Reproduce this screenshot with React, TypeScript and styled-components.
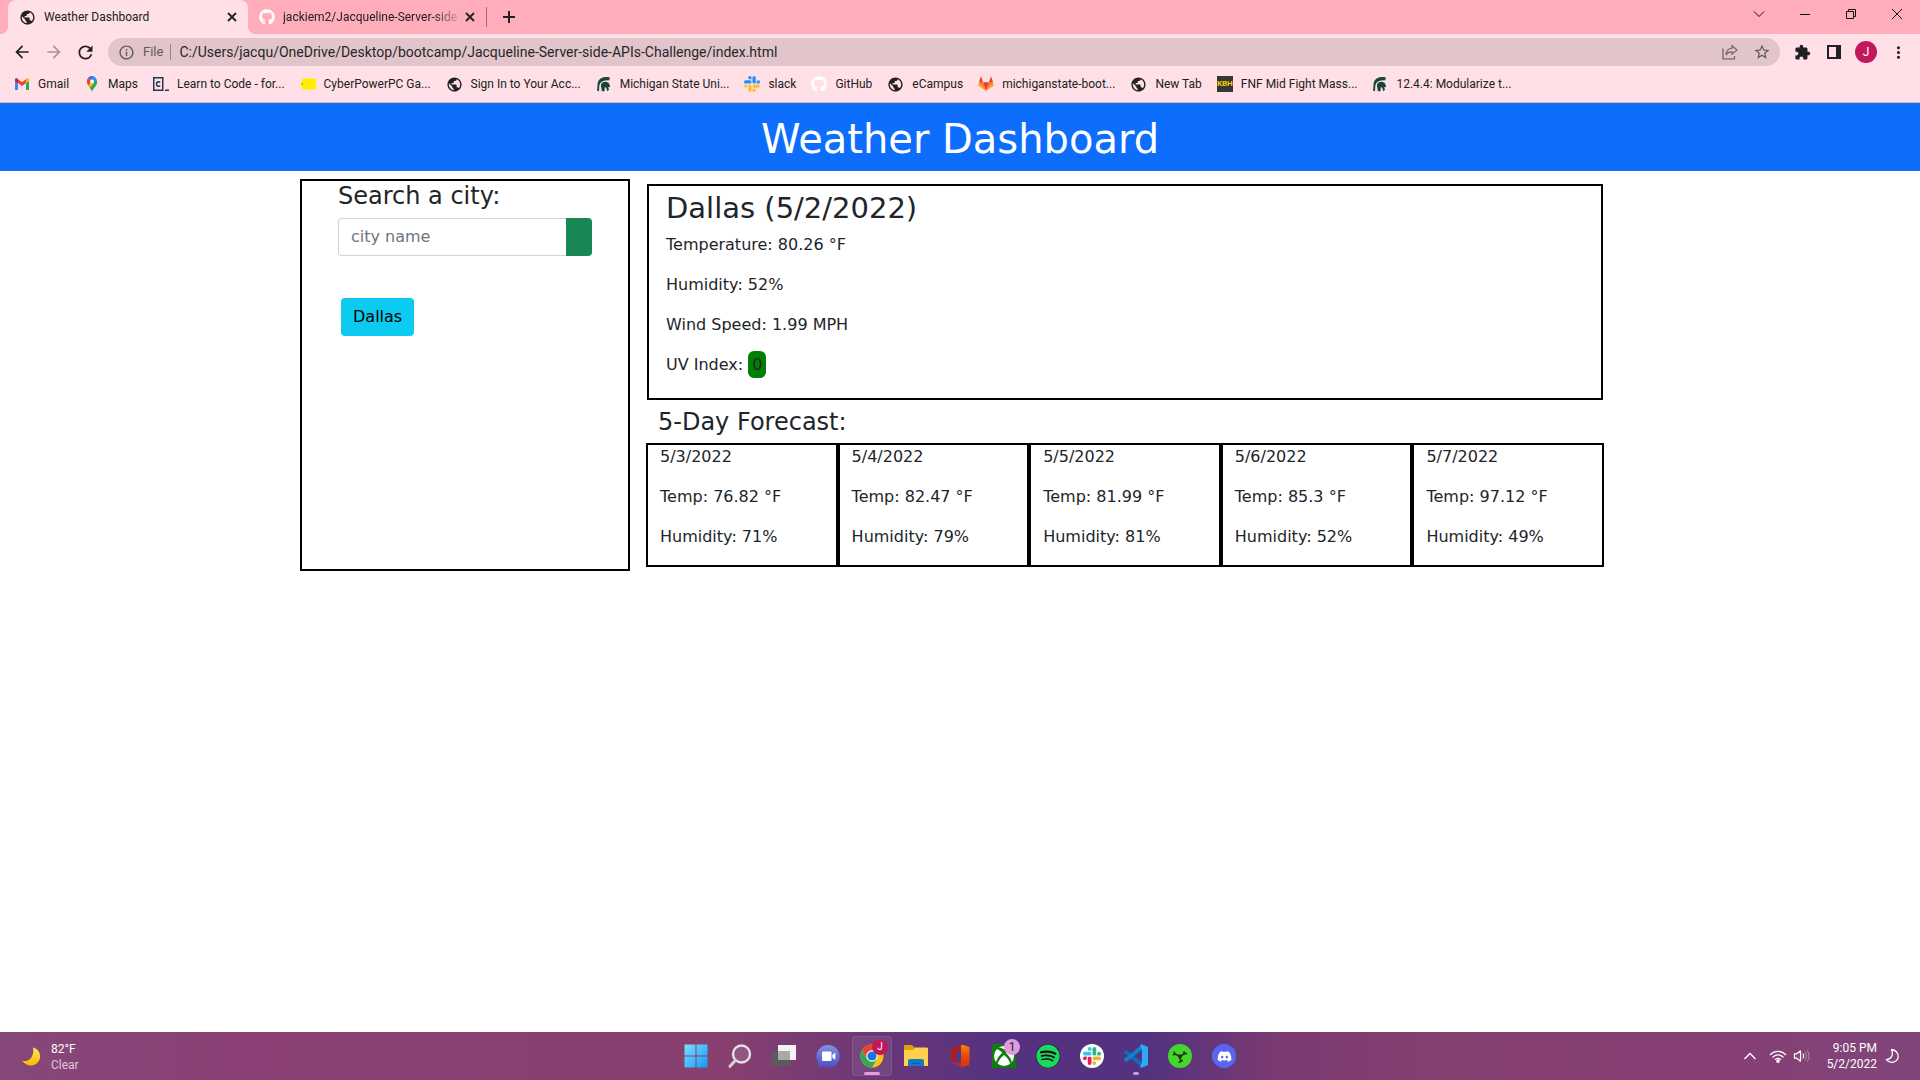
import React from 'react';
import styled, { createGlobalStyle } from 'styled-components';
import {
  MdPublic,
  MdExtension,
  MdStarOutline,
  MdInfoOutline,
  MdMoreVert,
  MdArrowBack,
  MdArrowForward,
  MdRefresh,
} from 'react-icons/md';
import { FaGithub, FaDiscord, FaSpotify } from 'react-icons/fa';

const GlobalStyle = createGlobalStyle`
  *, *::before, *::after { box-sizing: border-box; }
  body {
    margin: 0;
    background: #fff;
    color: #212529;
    font: 16px/24px "DejaVu Sans", Verdana, sans-serif;
  }
  h1, h2, h3, p, ul { margin: 0; padding: 0; font-weight: 400; }
  ul { list-style: none; }
  button, input { font: inherit; color: inherit; }
  svg { display: block; flex: none; }
`;

const Screen = styled.div`
  display: flex;
  flex-direction: column;
  min-height: 100vh;
`;

/* ---------- browser window ---------- */

const Browser = styled.header`
  background: #ffe0e6;
  border-bottom: 1px solid #d9b9c0;
  font: 12px/16px Roboto, "Noto Sans", sans-serif;
  color: #202124;
`;

const TabStrip = styled.div`
  display: flex;
  height: 34px;
  padding-left: 8px;
  background: #ffadbb;
`;

const Tab = styled.div<{ $active?: boolean; $width: number }>`
  position: relative;
  display: flex;
  align-items: center;
  gap: 8px;
  width: ${(p) => p.$width}px;
  padding: 0 11px;
  border-radius: 8px 8px 0 0;
  background: ${(p) => (p.$active ? '#ffe0e6' : 'transparent')};

  &::before,
  &::after {
    content: '';
    display: ${(p) => (p.$active ? 'block' : 'none')};
    position: absolute;
    bottom: 0;
    width: 8px;
    height: 8px;
  }
  &::before {
    left: -8px;
    background: radial-gradient(circle at 0 0, transparent 8px, #ffe0e6 8px);
  }
  &::after {
    right: -8px;
    background: radial-gradient(circle at 100% 0, transparent 8px, #ffe0e6 8px);
  }
`;

const TabTitle = styled.span<{ $fade?: boolean }>`
  flex: 1;
  min-width: 0;
  white-space: nowrap;
  ${(p) => p.$fade && 'mask-image: linear-gradient(90deg, #000 86%, rgba(0, 0, 0, .2));'}
`;

const PlainButton = styled.button<{ $w?: number; $h?: number }>`
  display: grid;
  place-items: center;
  flex: none;
  width: ${(p) => p.$w ?? 16}px;
  height: ${(p) => p.$h ?? 16}px;
  padding: 0;
  border: 0;
  background: none;
`;

const TabDivider = styled.span`
  align-self: center;
  width: 1px;
  height: 20px;
  margin-right: 14px;
  background: #a26b76;
`;

const WindowButtons = styled.div`
  display: flex;
  margin-left: auto;
`;

const Toolbar = styled.div`
  display: flex;
  align-items: center;
  height: 36px;
  padding-right: 6px;
`;

const Omnibox = styled.div`
  display: flex;
  align-items: center;
  flex: 1;
  height: 28px;
  margin: 0 6px 0 2px;
  padding: 0 2px 0 10px;
  border-radius: 14px;
  background: #e1c5ca;
  color: #5f5a5e;
`;

const FileLabel = styled.label`
  margin-left: 8px;
  padding-right: 7px;
  border-right: 1px solid #98858a;
  font-size: 13px;
`;

const UrlInput = styled.input`
  flex: 1;
  min-width: 0;
  padding: 0 0 0 8px;
  border: 0;
  outline: 0;
  background: none;
  font-size: 14px;
  line-height: 20px;
  color: #28262b;
`;

const OmniActions = styled.div`
  display: flex;
`;

const Avatar = styled.span<{ $size: number }>`
  display: grid;
  place-items: center;
  width: ${(p) => p.$size}px;
  height: ${(p) => p.$size}px;
  border-radius: 50%;
  background: #c2185b;
  color: #fff;
  font: 12px/12px Roboto, sans-serif;
`;

const Bookmarks = styled.ul`
  display: flex;
  align-items: center;
  gap: 15px;
  height: 32px;
  padding: 0 0 4px 14px;
`;

const BookmarkLink = styled.a`
  display: flex;
  align-items: center;
  gap: 8px;
  color: inherit;
  text-decoration: none;
  white-space: nowrap;
`;

const KbhBadge = styled.span`
  display: grid;
  place-items: center;
  width: 16px;
  height: 16px;
  background: #363636;
  color: #ffcb05;
  font: 700 8px/16px Roboto, sans-serif;
`;

/* ---------- weather page ---------- */

const Page = styled.main`
  flex: 1;
`;

const Hero = styled.div`
  margin-bottom: 8px;
  padding: 12px 0 8px;
  background: #0d6efd;
  color: #fff;
  text-align: center;

  h1 {
    font-size: 40px;
    line-height: 48px;
  }
`;

const Container = styled.div`
  display: grid;
  grid-template-columns: 1fr 3fr;
  max-width: 1320px;
  margin: 0 auto;
`;

const SearchPanel = styled.section`
  padding: 0 36px;
  border: 2px solid #000;
`;

const Heading = styled.h2<{ $large?: boolean }>`
  display: block;
  padding-top: 1px;
  font-size: ${(p) => (p.$large ? 29 : 24)}px;
  line-height: ${(p) => (p.$large ? 35 : 29)}px;
`;

const SearchForm = styled.form`
  display: flex;
  height: 38px;
  margin: 7px 0 42px;

  input {
    flex: 1;
    min-width: 0;
    padding: 6px 12px;
    border: 1px solid #ced4da;
    border-right: 0;
    border-radius: 4px 0 0 4px;
    outline: 0;
  }
  input::placeholder {
    color: #6c757d;
    opacity: 1;
  }
  button {
    width: 26px;
    border: 0;
    border-radius: 0 4px 4px 0;
    background: #198754;
  }
`;

const CityButton = styled.button`
  height: 38px;
  margin-left: 3px;
  padding: 6px 12px;
  border: 0;
  border-radius: 4px;
  background: #0dcaf0;
  color: #000;
`;

const Results = styled.div`
  padding: 5px 16px 4px;
`;

const Current = styled.section`
  margin: 0 1px 7px;
  padding: 4px 17px 5px;
  border: 2px solid #000;

  h2 {
    margin-bottom: 7px;
  }
  p {
    margin-bottom: 16px;
  }
`;

const UvBadge = styled.span`
  padding: 4px;
  border-radius: 6px;
  background: #008000;
`;

const ForecastTitle = styled.div`
  padding: 0 12px 6px;
`;

const Forecast = styled.div`
  display: grid;
  grid-template-columns: repeat(5, 1fr);
`;

const Day = styled.article`
  padding: 0 12px;
  border: 2px solid #000;

  p {
    margin-bottom: 16px;
  }
`;

/* ---------- taskbar ---------- */

const Taskbar = styled.footer`
  display: grid;
  grid-template-columns: 1fr auto 1fr;
  align-items: center;
  height: 48px;
  background: linear-gradient(
    90deg,
    #854878 0,
    #8a4074 12%,
    #87406f 38%,
    #6d3876 45%,
    #553280 52%,
    #53327f 60%,
    #793972 66%,
    #84406f 75%,
    #863f74 90%,
    #80457a 100%
  );
  color: #fff;
  font: 12px/16px Roboto, "Noto Sans", sans-serif;
`;

const WeatherWidget = styled.button`
  display: flex;
  align-items: center;
  justify-self: start;
  gap: 8px;
  padding: 1px 0 0 21px;
  border: 0;
  background: none;
  text-align: left;

  small {
    display: block;
    font-size: 12px;
    color: #e0c8da;
  }
`;

const Apps = styled.div`
  display: flex;
  gap: 4px;
`;

const AppButton = styled.button<{ $open?: boolean; $running?: 'wide' | 'dot' }>`
  position: relative;
  display: grid;
  place-items: center;
  width: 40px;
  height: 40px;
  padding: 0;
  border: 1px solid ${(p) => (p.$open ? 'rgba(255,255,255,.08)' : 'transparent')};
  border-radius: 4px;
  background: ${(p) => (p.$open ? 'rgba(255,255,255,.07)' : 'none')};

  &::after {
    content: '';
    display: ${(p) => (p.$running ? 'block' : 'none')};
    position: absolute;
    bottom: 0;
    left: 50%;
    width: ${(p) => (p.$running === 'wide' ? 16 : 6)}px;
    height: 3px;
    border-radius: 2px;
    background: ${(p) => (p.$running === 'wide' ? '#e29ae0' : '#b9a3c8')};
    transform: translateX(-50%);
  }
`;

const Badge = styled.span<{ $pink?: boolean }>`
  position: absolute;
  top: 2px;
  right: 3px;
  display: grid;
  place-items: center;
  width: 16px;
  height: 16px;
  border-radius: 50%;
  background: ${(p) => (p.$pink ? '#e29ae0' : '#c2185b')};
  color: ${(p) => (p.$pink ? '#222' : '#fff')};
  font: ${(p) => (p.$pink ? 12 : 10)}px/16px Roboto, sans-serif;
`;

const RoundIcon = styled.span<{ $bg: string }>`
  display: grid;
  place-items: center;
  width: 24px;
  height: 24px;
  border-radius: 50%;
  background: ${(p) => p.$bg};
`;

const Tray = styled.div`
  display: flex;
  align-items: center;
  justify-self: end;
  padding-right: 20px;
`;

const TrayIcons = styled.div`
  display: flex;
  align-items: center;
  gap: 6px;
  margin-right: 16px;
`;

const Clock = styled.time`
  margin-right: 8px;
  text-align: right;

  span {
    display: block;
  }
`;

/* ---------- drawings ---------- */

const Cross = () => (
  <svg width="10" height="10" viewBox="0 0 10 10" stroke="#202124" strokeWidth="1.800">
    <path d="M1 1l8 8M9 1l-8 8" />
  </svg>
);

const Globe = () => <MdPublic size={17} color="#202124" />;

const Gmail = () => (
  <svg width="16" height="16" viewBox="0 0 16 16">
    <path fill="#4285f4" d="M1 14h3V7L1 4.800z" />
    <path fill="#34a853" d="M12 14h3V4.800L12 7z" />
    <path fill="#ea4335" d="M4 7V3.200l4 3 4-3V7l-4 3z" />
    <path fill="#c5221f" d="M1 5V3.500C1 2 2.700 1.700 4 2.800V7.200z" />
    <path fill="#fbbc04" d="M15 5V3.500c0-1.500-1.700-1.800-3-.7v4.400z" />
  </svg>
);

const Maps = () => (
  <svg width="16" height="16" viewBox="0 0 16 16">
    <path fill="#34a853" d="M8 16c.5-3.500 5.200-5.500 5.200-10.500L12.400 3 4.200 9.500C5.800 12 7.400 13.500 8 16z" />
    <path fill="#fbbc04" d="M4.200 9.600l2.200-2.700 3.400.3-4 4.800z" />
    <path fill="#4285f4" d="M12.400 3C11.800 1.600 10.800.7 9.500.3L6.300 4l3.500 3.100z" />
    <path fill="#1a73e8" d="M9.500.3C7.400-.3 5.300.4 4 2l2.400 2z" />
    <path fill="#ea4335" d="M4 2C2.500 3.800 2.400 6.700 4.200 9.600l3.700-4.400z" />
    <circle cx="8" cy="5.500" r="2" fill="#fff" />
  </svg>
);

const Codecademy = () => (
  <svg width="16" height="16" viewBox="0 0 16 16" fill="none" stroke="#1f3a56">
    <rect x="0.750" y="1.750" width="9" height="12.500" strokeWidth="1.500" />
    <path d="M7.300 6.300C5 5 3.500 6.300 3.500 8s1.500 3 3.800 1.800M12 14.300h4" strokeWidth="1.500" />
  </svg>
);

const YellowTag = () => (
  <svg width="16" height="16" viewBox="0 0 16 16">
    <path fill="#ffee00" d="M3 2.500h13v11H3L1.500 11V9.500H0v-2h1.500V5z" />
    <circle cx="2.500" cy="8" r="0.700" fill="#8a7a00" />
  </svg>
);

const Spartan = () => (
  <svg width="16" height="16" viewBox="0 0 16 16" fill="#18453b">
    <path d="M13.500 1.200C8 .3 3 2 1.800 6.500 1.200 9 1.600 12 1 14.500l2 .8c.3-3.300-.1-6 1.200-8C5.800 4.800 9 4 13.500 4.300z" />
    <path d="M5 8.200C6.500 5.600 10 5 12.300 6.800c1.300 1 1.400 2.600 1.800 4.200l-2 .2.900 2.600-1.800 1.400-.9-3.400-1.500-.5-.3 3.900H5.800C6 12.500 4.500 11 5 8.200z" />
  </svg>
);

const SLACK = [
  'M5.042 15.165a2.528 2.528 0 0 1-2.520 2.523A2.528 2.528 0 0 1 0 15.165a2.527 2.527 0 0 1 2.522-2.520h2.520v2.520zM6.313 15.165a2.527 2.527 0 0 1 2.521-2.520 2.527 2.527 0 0 1 2.521 2.520v6.313A2.528 2.528 0 0 1 8.834 24a2.528 2.528 0 0 1-2.521-2.522v-6.313z',
  'M8.834 5.042a2.528 2.528 0 0 1-2.521-2.520A2.528 2.528 0 0 1 8.834 0a2.528 2.528 0 0 1 2.521 2.522v2.520H8.834zM8.834 6.313a2.528 2.528 0 0 1 2.521 2.521 2.528 2.528 0 0 1-2.521 2.521H2.522A2.528 2.528 0 0 1 0 8.834a2.528 2.528 0 0 1 2.522-2.521h6.312z',
  'M18.956 8.834a2.528 2.528 0 0 1 2.522-2.521A2.528 2.528 0 0 1 24 8.834a2.528 2.528 0 0 1-2.522 2.521h-2.522V8.834zM17.688 8.834a2.528 2.528 0 0 1-2.523 2.521 2.527 2.527 0 0 1-2.520-2.521V2.522A2.527 2.527 0 0 1 15.165 0a2.528 2.528 0 0 1 2.523 2.522v6.312z',
  'M15.165 18.956a2.528 2.528 0 0 1 2.523 2.522A2.528 2.528 0 0 1 15.165 24a2.527 2.527 0 0 1-2.520-2.522v-2.522h2.520zM15.165 17.688a2.527 2.527 0 0 1-2.520-2.523 2.526 2.526 0 0 1 2.520-2.520h6.313A2.527 2.527 0 0 1 24 15.165a2.528 2.528 0 0 1-2.522 2.523h-6.313z',
];

const Slack = ({ size, colors }: { size: number; colors: string[] }) => (
  <svg width={size} height={size} viewBox="0 0 24 24">
    {SLACK.map((d, i) => (
      <path key={i} d={d} fill={colors[i]} />
    ))}
  </svg>
);

const Gitlab = () => (
  <svg width="16" height="16" viewBox="0 0 16 16">
    <path fill="#e24329" d="M8 15L5 6.200h6z" />
    <path fill="#fc6d26" d="M8 15L5 6.200H1zM8 15l3-8.800h4z" />
    <path fill="#fca326" d="M1 6.200L.2 9c-.1.300 0 .6.200.8L8 15zM15 6.200l.8 2.800c.1.300 0 .6-.2.800L8 15z" />
    <path fill="#e24329" d="M1 6.200h4L3.300 1c-.1-.3-.5-.3-.6 0zM15 6.200h-4L12.700 1c.1-.3.5-.3.6 0z" />
  </svg>
);

const Share = () => (
  <svg width="16" height="16" viewBox="0 0 16 16" fill="none" stroke="#76686d" strokeWidth="1.300">
    <path d="M1 4.500v10.300h11.500V12" />
    <path d="M10 1.800l5 4.200-5 4.200V7.800c-2.800 0-4.600.8-6 3 .3-3.800 2.500-6.200 6-6.600z" />
  </svg>
);

const SidePanel = () => (
  <svg width="14" height="14" viewBox="0 0 14 14">
    <path fill="#202124" fillRule="evenodd" d="M0 0h14v14H0zM2 2v10h7V2z" />
  </svg>
);

const WindowIcon = ({ d }: { d: string }) => (
  <svg width="12" height="12" viewBox="0 0 12 12" fill="none" stroke="#111" strokeWidth="1">
    <path d={d} />
  </svg>
);

const MoonYellow = () => (
  <svg width="22" height="22" viewBox="0 0 22 22">
    <defs>
      <linearGradient id="moon" x1="0" y1="0" x2="0" y2="1">
        <stop offset="0" stopColor="#ffe45c" />
        <stop offset="1" stopColor="#ffb900" />
      </linearGradient>
    </defs>
    <path fill="url(#moon)" d="M12 1.500c5 1.200 8.300 6 6.800 11.200C16.800 19.800 7 22.500 1 14.800c6.500 1.700 12.800-3.800 11-13.300z" />
  </svg>
);

const Windows = () => (
  <svg width="24" height="24" viewBox="0 0 24 24">
    <defs>
      <linearGradient id="win" x1="0" y1="0" x2="1" y2="1">
        <stop offset="0" stopColor="#7ce0ff" />
        <stop offset="1" stopColor="#0f9bf7" />
      </linearGradient>
    </defs>
    <path fill="url(#win)" d="M.5.5h11v11H.5zM12.500.5h11v11h-11zM.5 12.500h11v11H.5zM12.500 12.500h11v11h-11z" />
  </svg>
);

const Search = () => (
  <svg width="24" height="24" viewBox="0 0 24 24" fill="none" strokeLinecap="round">
    <circle cx="13.500" cy="10" r="8.500" fill="rgba(255,255,255,.12)" stroke="#e6e2e6" strokeWidth="2.400" />
    <path d="M7.300 16.500L2 22.300" stroke="#d5cfd6" strokeWidth="3" />
  </svg>
);

const TaskView = () => (
  <svg width="26" height="24" viewBox="0 0 26 24">
    <path fill="#5d5a5e" d="M1 7h18v15H1z" />
    <path fill="#f2f2f2" d="M7 1h18v15H7z" />
    <path fill="#a9a8aa" d="M7 7h12v9H7z" />
  </svg>
);

const Chat = () => (
  <svg width="24" height="24" viewBox="0 0 24 24">
    <defs>
      <linearGradient id="chat" x1="0" y1="0" x2="0" y2="1">
        <stop offset="0" stopColor="#8091e0" />
        <stop offset="1" stopColor="#4d50c4" />
      </linearGradient>
    </defs>
    <path fill="url(#chat)" d="M12 1a11.300 11.300 0 1 1-5 21.300L1 23.500 2 18A11.300 11.300 0 0 1 12 1z" />
    <rect x="6" y="7.500" width="9.500" height="9.500" rx="1" fill="#fff" />
    <path fill="#fff" d="M16.300 11l3-2.500v7.500l-3-2.500z" />
  </svg>
);

const Chrome = () => (
  <svg width="24" height="24" viewBox="0 0 24 24">
    <circle cx="12" cy="12" r="11.500" fill="#fbc116" />
    <path fill="#ea4335" d="M2 6.200A11.500 11.500 0 0 1 22 6.250H12L7 14.900z" />
    <path fill="#34a853" d="M2 6.250l5 8.700 5 2.800 4.900 -2.850L12 23.500A11.500 11.500 0 0 1 2 6.250z" />
    <circle cx="12" cy="12" r="5.750" fill="#fff" />
    <circle cx="12" cy="12" r="4.600" fill="#1a73e8" />
  </svg>
);

const Folder = () => (
  <svg width="26" height="24" viewBox="0 0 26 24">
    <path fill="#e8a200" d="M1 2.500C1 1.700 1.500 1 2.300 1H9l2.500 2.500V8H1z" />
    <path fill="#ffd04c" d="M1 6h9l2-2.500h11.700c.8 0 1.300.6 1.300 1.300V22H1z" />
    <path fill="#1578c8" d="M5 17c0-1.100.9-2 2-2h12c1.100 0 2 .9 2 2v5H5z" />
    <path fill="#0c5ea8" d="M9 18.500h8v1.500H9z" />
  </svg>
);

const Office = () => (
  <svg width="24" height="24" viewBox="0 0 24 24">
    <defs>
      <linearGradient id="office" x1="0" y1="0" x2="0" y2="1">
        <stop offset="0" stopColor="#f28a00" />
        <stop offset="0.500" stopColor="#e8490f" />
        <stop offset="1" stopColor="#d8300c" />
      </linearGradient>
    </defs>
    <path fill="#b81a1a" d="M14 1L3 5v13l4.500-2V7.500l7-1.800z" />
    <path fill="#d3222a" d="M3 18l11 5v-3.500L7.500 18.500z" />
    <path fill="url(#office)" d="M13 1l2-.3 6.500 2.500v17.600L15 23.300 13 23z" />
  </svg>
);

const Xbox = () => (
  <svg width="24" height="24" viewBox="0 0 24 24">
    <path fill="#107c10" d="M0 0h24v24H0z" />
    <circle cx="12" cy="12" r="10" fill="#fff" />
    <path
      fill="#107c10"
      d="M12 5.500C10 3.800 7.500 2.800 5.700 3.800L4.500 5c3 .7 4.700 2.500 5.700 3.800C7 11.800 4 16 4.300 19l1.300 1c.8-3.500 3.600-6.800 6.400-9 2.800 2.200 5.600 5.500 6.400 9l1.300-1c.3-3-2.700-7.200-5.900-10.200 1-1.300 2.700-3.100 5.700-3.800l-1.200-1.200c-1.800-1-4.300 0-6.300 1.700z"
    />
  </svg>
);

const VsCode = () => (
  <svg width="24" height="24" viewBox="0 0 24 24">
    <path fill="#0a6ebd" d="M0 7.500L2 6l16 12v5.500L0 9z" />
    <path fill="#0f80d0" d="M0 16.500L2 18 18 6V.5L0 15z" />
    <path fill="#30a9f3" d="M17.500.2L24 3v18l-6.500 2.800L16 22.500 18 18V6l-2-4.500z" />
  </svg>
);

const Razer = () => (
  <svg width="16" height="16" viewBox="0 0 16 16" fill="none" stroke="#1a3d14" strokeWidth="1.700" strokeLinecap="round">
    <path d="M8 8.500L3 6M8 8.500L12.500 5.500M8 8.500l.7 5M3 6l-.8-1.700M3 6l-1.500.8M12.500 5.500L12 3.800M12.500 5.500l1.800.2M8.700 13.500l-1.500.7M8.700 13.500l1.500-.9" />
    <circle cx="8" cy="8.500" r="1.300" fill="#1a3d14" />
  </svg>
);

const Wifi = () => (
  <svg width="18" height="14" viewBox="0 0 18 14" fill="none" stroke="#fff" strokeWidth="1.300" strokeLinecap="round">
    <path d="M1.500 5.500c4.200-4.200 10.800-4.200 15 0M4 8c2.800-2.800 7.200-2.800 10 0M6.400 10.400c1.500-1.500 3.700-1.500 5.200 0" />
    <circle cx="9" cy="12" r="1.200" fill="#fff" />
  </svg>
);

const Volume = () => (
  <svg width="18" height="14" viewBox="0 0 18 14" fill="none" stroke="#fff" strokeWidth="1.200" strokeLinecap="round" strokeLinejoin="round">
    <path d="M1.500 4.800v4.400h2.300l3.700 3V1.800l-3.700 3zM10 5c.9 1.200.9 2.800 0 4" />
    <path d="M12 3.500c1.800 2 1.800 5 0 7M14.200 1.800c2.600 3 2.600 7.400 0 10.400" stroke="#b07fa6" />
  </svg>
);

const MoonOutline = () => (
  <svg width="15" height="16" viewBox="0 0 15 16" fill="none" stroke="#fff" strokeWidth="1.300" strokeLinejoin="round">
    <path d="M6.500 1.500c4.300.4 7 3.800 6.600 7.500-.5 5-7.800 7.500-11.800 2.600C5.500 11.500 9 8 6.500 1.500z" />
  </svg>
);

/* ---------- data ---------- */

const BRAND_SLACK = ['#e01e5a', '#36c5f0', '#2eb67d', '#ecb22e'];

const bookmarks = [
  { label: 'Gmail', icon: <Gmail /> },
  { label: 'Maps', icon: <Maps /> },
  { label: 'Learn to Code - for...', icon: <Codecademy /> },
  { label: 'CyberPowerPC Ga...', icon: <YellowTag /> },
  { label: 'Sign In to Your Acc...', icon: <Globe /> },
  { label: 'Michigan State Uni...', icon: <Spartan /> },
  { label: 'slack', icon: <Slack size={16} colors={['#ffc02e', '#1e90ff', '#1e90ff', '#ffc02e']} /> },
  { label: 'GitHub', icon: <FaGithub size={16} color="#fff" /> },
  { label: 'eCampus', icon: <Globe /> },
  { label: 'michiganstate-boot...', icon: <Gitlab /> },
  { label: 'New Tab', icon: <Globe /> },
  { label: 'FNF Mid Fight Mass...', icon: <KbhBadge>KBH</KbhBadge> },
  { label: '12.4.4: Modularize t...', icon: <Spartan /> },
];

const days = [
  { date: '5/3/2022', temp: '76.82', humidity: 71 },
  { date: '5/4/2022', temp: '82.47', humidity: 79 },
  { date: '5/5/2022', temp: '81.99', humidity: 81 },
  { date: '5/6/2022', temp: '85.3', humidity: 52 },
  { date: '5/7/2022', temp: '97.12', humidity: 49 },
];

const windowButtons = [
  { name: 'Search tabs', d: 'M1 3.500l5 5 5-5' },
  { name: 'Minimize', d: 'M1 6.500h10' },
  { name: 'Restore', d: 'M1.500 3.500h7v7h-7zM3.500 3.500v-2h7v7h-2' },
  { name: 'Close window', d: 'M1 1l10 10M11 1L1 11' },
];

export default function App() {
  return (
    <Screen>
      <GlobalStyle />
      <Browser>
        <TabStrip>
          <Tab $active $width={240}>
            <Globe />
            <TabTitle>Weather Dashboard</TabTitle>
            <PlainButton aria-label="Close tab" $w={10}><Cross /></PlainButton>
          </Tab>
          <Tab $width={238}>
            <FaGithub size={16} color="#fff" />
            <TabTitle $fade>jackiem2/Jacqueline-Server-side-</TabTitle>
            <PlainButton aria-label="Close tab" $w={10}><Cross /></PlainButton>
          </Tab>
          <TabDivider />
          <PlainButton aria-label="New tab" $h={34}>
            <svg width="12" height="12" viewBox="0 0 12 12" stroke="#202124" strokeWidth="2">
              <path d="M6 0v12M0 6h12" />
            </svg>
          </PlainButton>
          <WindowButtons>
            {windowButtons.map((b) => (
              <PlainButton key={b.name} aria-label={b.name} $w={46} $h={28}>
                <WindowIcon d={b.d} />
              </PlainButton>
            ))}
          </WindowButtons>
        </TabStrip>

        <Toolbar>
          <PlainButton aria-label="Back" $w={44} $h={32}><MdArrowBack size={20} /></PlainButton>
          <PlainButton aria-label="Forward" $w={20} $h={32}><MdArrowForward size={20} color="#a8949a" /></PlainButton>
          <PlainButton aria-label="Reload" $w={42} $h={32}><MdRefresh size={21} /></PlainButton>
          <Omnibox>
            <MdInfoOutline size={17} />
            <FileLabel htmlFor="url">File</FileLabel>
            <UrlInput
              id="url"
              defaultValue="C:/Users/jacqu/OneDrive/Desktop/bootcamp/Jacqueline-Server-side-APIs-Challenge/index.html"
            />
            <OmniActions>
              <PlainButton aria-label="Share" $w={32} $h={28}><Share /></PlainButton>
              <PlainButton aria-label="Bookmark this page" $w={32} $h={28}><MdStarOutline size={18} /></PlainButton>
            </OmniActions>
          </Omnibox>
          <PlainButton aria-label="Extensions" $w={32} $h={32}><MdExtension size={17} /></PlainButton>
          <PlainButton aria-label="Side panel" $w={32} $h={32}><SidePanel /></PlainButton>
          <PlainButton aria-label="Profile" $w={32} $h={32}><Avatar $size={22}>J</Avatar></PlainButton>
          <PlainButton aria-label="Menu" $w={32} $h={32}><MdMoreVert size={19} /></PlainButton>
        </Toolbar>

        <Bookmarks>
          {bookmarks.map((b) => (
            <li key={b.label}>
              <BookmarkLink href="#">
                {b.icon}
                {b.label}
              </BookmarkLink>
            </li>
          ))}
        </Bookmarks>
      </Browser>

      <Page>
        <Hero>
          <h1>Weather Dashboard</h1>
        </Hero>
        <Container>
          <SearchPanel>
            <Heading as="label" htmlFor="city">Search a city:</Heading>
            <SearchForm onSubmit={(e) => e.preventDefault()}>
              <input id="city" placeholder="city name" />
              <button type="submit" aria-label="Search" />
            </SearchForm>
            <CityButton>Dallas</CityButton>
          </SearchPanel>
          <Results>
            <Current>
              <Heading $large>Dallas (5/2/2022)</Heading>
              <p>Temperature: 80.26 °F</p>
              <p>Humidity: 52%</p>
              <p>Wind Speed: 1.99 MPH</p>
              <p>UV Index: <UvBadge>0</UvBadge></p>
            </Current>
            <ForecastTitle>
              <Heading>5-Day Forecast:</Heading>
            </ForecastTitle>
            <Forecast>
              {days.map((d) => (
                <Day key={d.date}>
                  <p>{d.date}</p>
                  <p>Temp: {d.temp} °F</p>
                  <p>Humidity: {d.humidity}%</p>
                </Day>
              ))}
            </Forecast>
          </Results>
        </Container>
      </Page>

      <Taskbar>
        <WeatherWidget>
          <MoonYellow />
          <span>
            82°F
            <small>Clear</small>
          </span>
        </WeatherWidget>
        <Apps>
          <AppButton aria-label="Start"><Windows /></AppButton>
          <AppButton aria-label="Search"><Search /></AppButton>
          <AppButton aria-label="Task view"><TaskView /></AppButton>
          <AppButton aria-label="Chat"><Chat /></AppButton>
          <AppButton aria-label="Chrome" $open $running="wide"><Chrome /><Badge>J</Badge></AppButton>
          <AppButton aria-label="File Explorer"><Folder /></AppButton>
          <AppButton aria-label="Office"><Office /></AppButton>
          <AppButton aria-label="Xbox"><Xbox /><Badge $pink>1</Badge></AppButton>
          <AppButton aria-label="Spotify"><RoundIcon $bg="#111"><FaSpotify size={24} color="#1ed760" /></RoundIcon></AppButton>
          <AppButton aria-label="Slack"><RoundIcon $bg="#fff"><Slack size={18} colors={BRAND_SLACK} /></RoundIcon></AppButton>
          <AppButton aria-label="Visual Studio Code" $running="dot"><VsCode /></AppButton>
          <AppButton aria-label="Razer Cortex"><RoundIcon $bg="#44d62c"><Razer /></RoundIcon></AppButton>
          <AppButton aria-label="Discord"><RoundIcon $bg="#5865f2"><FaDiscord size={15} color="#fff" /></RoundIcon></AppButton>
        </Apps>
        <Tray>
          <TrayIcons>
            <PlainButton aria-label="Show hidden icons" $w={26}>
              <svg width="14" height="14" viewBox="0 0 14 14" fill="none" stroke="#fff" strokeWidth="1.300">
                <path d="M1.500 10L7 4.500l5.500 5.500" />
              </svg>
            </PlainButton>
            <Wifi />
            <Volume />
          </TrayIcons>
          <Clock>
            <span>9:05 PM</span>
            <span>5/2/2022</span>
          </Clock>
          <MoonOutline />
        </Tray>
      </Taskbar>
    </Screen>
  );
}
